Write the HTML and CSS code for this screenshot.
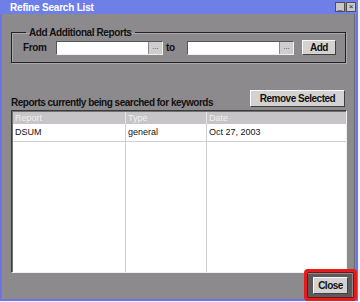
FILE: index.html
```html
<!DOCTYPE html>
<html lang="en">
<head>
  <meta charset="UTF-8">
  <meta name="viewport" content="width=device-width, initial-scale=1.0">
  <title>Refine Search List</title>
  <link rel="stylesheet" href="styles.css">
</head>
<body>

  <div class="window">
    <div class="titlebar">
      <span class="title">Refine Search List</span>
      <div class="winbtns">
        <span class="winbtn">_</span>
        <span class="winbtn">&times;</span>
      </div>
    </div>

    <div class="content">
      <fieldset class="group">
        <legend>Add Additional Reports</legend>
        <div class="range-row">
          <span class="lbl from">From</span>
          <div class="datebox"><span class="field"></span><span class="dots">...</span></div>
          <span class="lbl to">to</span>
          <div class="datebox"><span class="field"></span><span class="dots">...</span></div>
          <button class="btn add">Add</button>
        </div>
      </fieldset>

      <div class="list-head">
        <span class="caption">Reports currently being searched for keywords</span>
        <button class="btn remove">Remove Selected</button>
      </div>

      <div class="table">
        <div class="row header">
          <span class="c1">Report</span>
          <span class="c2">Type</span>
          <span class="c3">Date</span>
        </div>
        <div class="row data">
          <span class="c1">DSUM</span>
          <span class="c2">general</span>
          <span class="c3">Oct 27, 2003</span>
        </div>
        <div class="row filler">
          <span class="c1"></span>
          <span class="c2"></span>
          <span class="c3"></span>
        </div>
      </div>

      <div class="footer">
        <div class="highlight">
          <button class="btn close">Close</button>
        </div>
      </div>
    </div>
  </div>

</body>
</html>
```

FILE: styles.css
```css
body {
  margin: 0;
  background-color: #f4f4f4;
  font-family: "Liberation Sans", Arial, sans-serif;
}
.window {
  width: 358px;
  height: 301px;
  box-sizing: border-box;
  background-color: #8c8a8c;
  border: 2px solid #6c74e8;
  border-top: none;
  display: flex;
  flex-direction: column;
}
.titlebar {
  height: 14px;
  background-color: #6f7fe8;
  margin: 0 -2px;
  padding: 0 2px 0 10px;
  display: flex;
  align-items: center;
  justify-content: space-between;
}
.title {
  color: white;
  font-weight: bold;
  font-size: 10px;
  letter-spacing: -0.2px;
}
.winbtns {
  display: flex;
  gap: 1px;
}
.winbtn {
  width: 8px;
  height: 8px;
  background-color: #c8c8c8;
  border: 1px solid #505050;
  font-size: 8px;
  line-height: 7px;
  text-align: center;
  color: #202020;
}
.content {
  flex: 1;
  padding: 13px 8px 0 9px;
  display: flex;
  flex-direction: column;
  border-right: 1px solid #6a686a;
  margin-right: 1px;
}
.group {
  margin: 0;
  padding: 2px 0 0 11px;
  height: 36px;
  box-sizing: border-box;
  border: 1px solid #222;
  box-shadow: 1px 1px 0 #aaa8aa, inset 1px 1px 0 #aaa8aa;
}
.group legend {
  font-size: 10px;
  font-weight: bold;
  letter-spacing: -0.4px;
  padding: 0 3px;
  margin-left: 3px;
  color: #111;
}
.range-row {
  display: flex;
  align-items: center;
}
.lbl {
  font-size: 10px;
  font-weight: bold;
  letter-spacing: -0.4px;
  color: #111;
}
.from { width: 33px; }
.to { width: 21px; margin-left: 3px; }
.datebox {
  width: 107px;
  height: 14px;
  box-sizing: border-box;
  background: white;
  border: 1px solid #555;
  border-right-color: #eee;
  border-bottom-color: #eee;
  display: flex;
}
.field { flex: 1; }
.dots {
  width: 13px;
  background: #d0cecc;
  border-left: 1px solid #888;
  font-size: 8px;
  line-height: 9px;
  text-align: center;
  color: #444;
}
.btn {
  font-family: "Liberation Sans", Arial, sans-serif;
  font-size: 10px;
  font-weight: bold;
  letter-spacing: -0.5px;
  color: #111;
  background-color: #d4d2d0;
  border: 1px solid;
  border-color: #fafafa #404040 #404040 #fafafa;
  padding: 0;
  cursor: pointer;
}
.add {
  width: 34px;
  height: 15px;
  margin-left: 8px;
}
.list-head {
  margin-top: 27px;
  display: flex;
  justify-content: space-between;
  align-items: flex-end;
}
.caption {
  font-size: 10px;
  font-weight: bold;
  letter-spacing: -0.5px;
  color: #111;
  margin-bottom: -1px;
}
.remove {
  width: 95px;
  height: 17px;
  margin-right: 1px;
}
.table {
  margin-top: 3px;
  width: 336px;
  height: 163px;
  box-sizing: border-box;
  background: white;
  border: 1px solid;
  border-color: #3a3a3a #f0f0f0 #f0f0f0 #3a3a3a;
  box-shadow: inset 1px 1px 0 #707070;
  display: flex;
  flex-direction: column;
  padding: 1px 0 0 1px;
}
.row {
  display: grid;
  grid-template-columns: 113px 81px 1fr;
}
.row span {
  font-size: 9px;
  padding-left: 2px;
  border-right: 1px solid #cfcfcf;
}
.row .c3 { border-right: none; }
.header {
  height: 12px;
  background-color: #c6c4c6;
  line-height: 12px;
}
.header span {
  color: #f0f0f0;
  border-right-color: #e6e6e6;
}
.data {
  height: 17px;
  line-height: 16px;
  border-bottom: 1px solid #cfcfcf;
}
.data span { color: #111; }
.filler { flex: 1; }
.footer {
  flex: 1;
  display: flex;
  justify-content: flex-end;
  align-items: flex-start;
}
.highlight {
  position: relative;
  margin-top: 1px;
  margin-right: -6px;
  padding: 3px 4px 3px 6px;
  background-color: #5c5a5c;
}
.highlight::after {
  content: "";
  position: absolute;
  left: -3px;
  top: -5px;
  right: -5px;
  bottom: -4px;
  border: 3px solid #e41c1c;
  border-radius: 4px;
  box-shadow: inset 0 0 0 1px #7a1010;
}
.close {
  display: block;
  width: 35px;
  height: 17px;
}
```
